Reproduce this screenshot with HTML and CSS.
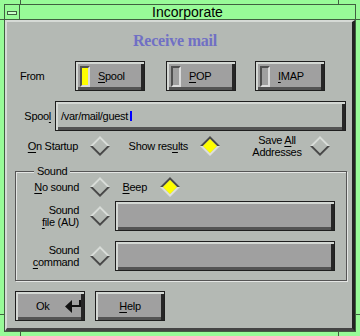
FILE: index.html
```html
<!DOCTYPE html>
<html lang="en">

<head>
    <meta charset="UTF-8">
    <title>Incorporate</title>
    <link rel="stylesheet" href="styles.css">
</head>

<body>
    <div class="frame">
        <!-- resize corner marks on the window frame -->
        <span class="tick tick-v" style="left:20px;top:0"></span>
        <span class="tick tick-v" style="left:338px;top:0"></span>
        <span class="tick tick-v" style="left:20px;bottom:0"></span>
        <span class="tick tick-v" style="left:338px;bottom:0"></span>
        <span class="tick tick-h" style="left:0;top:19px"></span>
        <span class="tick tick-h" style="right:0;top:19px"></span>
        <span class="tick tick-h" style="left:0;top:314px"></span>
        <span class="tick tick-h" style="right:0;top:314px"></span>

        <div class="inner">
            <div class="titlebar">
                <div class="menu"><span class="menu-icon"></span></div>
                <div class="title">Incorporate</div>
            </div>

            <div class="client">
                <div class="heading">Receive mail</div>

                <!-- source choice -->
                <div class="from-row">
                    <div class="from-label">From</div>
                    <button class="bevel toggle"><span class="ind on"></span><span><u>S</u>pool</span></button>
                    <button class="bevel toggle pop"><span class="ind"></span><span><u>P</u>OP</span></button>
                    <button class="bevel toggle imap"><span class="ind"></span><span><u>I</u>MAP</span></button>
                </div>

                <div class="spool-row">
                    <div class="spool-label">Spoo<u>l</u></div>
                    <div class="bevel field">/var/mail/guest<span class="cursor"></span></div>
                </div>

                <div class="opt-row">
                    <div class="opt-label o1"><u>O</u>n Startup</div>
                    <svg class="diamond" width="20" height="20" viewBox="0 0 20 20"><polygon class="d-top" points="0,10 10,0 20,10 17,10 10,3 3,10"/><polygon class="d-bot" points="0,10 10,20 20,10 17,10 10,17 3,10"/><polygon class="d-face" points="10,3 17,10 10,17 3,10"/></svg>
                    <div class="opt-label o2">Show res<u>u</u>lts</div>
                    <svg class="diamond on" width="20" height="20" viewBox="0 0 20 20"><polygon class="d-top" points="0,10 10,0 20,10 17,10 10,3 3,10"/><polygon class="d-bot" points="0,10 10,20 20,10 17,10 10,17 3,10"/><polygon class="d-face" points="10,3 17,10 10,17 3,10"/></svg>
                    <div class="opt-label o3">Save <u>A</u>ll<br>Addresses</div>
                    <svg class="diamond" width="20" height="20" viewBox="0 0 20 20"><polygon class="d-top" points="0,10 10,0 20,10 17,10 10,3 3,10"/><polygon class="d-bot" points="0,10 10,20 20,10 17,10 10,17 3,10"/><polygon class="d-face" points="10,3 17,10 10,17 3,10"/></svg>
                </div>

                <!-- sound settings -->
                <fieldset class="sound">
                    <legend>Sound</legend>
                    <div class="srow first">
                        <div class="slabel"><u>N</u>o sound</div>
                        <svg class="diamond" width="20" height="20" viewBox="0 0 20 20"><polygon class="d-top" points="0,10 10,0 20,10 17,10 10,3 3,10"/><polygon class="d-bot" points="0,10 10,20 20,10 17,10 10,17 3,10"/><polygon class="d-face" points="10,3 17,10 10,17 3,10"/></svg>
                        <div class="beep-label"><u>B</u>eep</div>
                        <svg class="diamond on" width="20" height="20" viewBox="0 0 20 20"><polygon class="d-top" points="0,10 10,0 20,10 17,10 10,3 3,10"/><polygon class="d-bot" points="0,10 10,20 20,10 17,10 10,17 3,10"/><polygon class="d-face" points="10,3 17,10 10,17 3,10"/></svg>
                    </div>
                    <div class="srow">
                        <div class="slabel">Sound<br><u>f</u>ile (AU)</div>
                        <svg class="diamond" width="20" height="20" viewBox="0 0 20 20"><polygon class="d-top" points="0,10 10,0 20,10 17,10 10,3 3,10"/><polygon class="d-bot" points="0,10 10,20 20,10 17,10 10,17 3,10"/><polygon class="d-face" points="10,3 17,10 10,17 3,10"/></svg>
                        <div class="bevel sfield"></div>
                    </div>
                    <div class="srow last">
                        <div class="slabel">Sound<br><u>c</u>ommand</div>
                        <svg class="diamond" width="20" height="20" viewBox="0 0 20 20"><polygon class="d-top" points="0,10 10,0 20,10 17,10 10,3 3,10"/><polygon class="d-bot" points="0,10 10,20 20,10 17,10 10,17 3,10"/><polygon class="d-face" points="10,3 17,10 10,17 3,10"/></svg>
                        <div class="bevel sfield"></div>
                    </div>
                </fieldset>

                <div class="btn-row">
                    <button class="bevel push ok">Ok
                        <svg class="enter" width="16" height="13" viewBox="0 0 16 13"><polygon points="0,6.5 7,0 7,13"/><rect x="7" y="5" width="9" height="2"/><rect x="14" y="0" width="2" height="7"/></svg>
                    </button>
                    <button class="bevel push help"><span><u>H</u>elp</span></button>
                </div>
            </div>
        </div>
    </div>
</body>

</html>
```

FILE: styles.css
```css
body {
    margin: 0;
    font-family: "Liberation Sans", Arial, sans-serif;
    font-size: 11px;
    letter-spacing: -0.3px;
    color: #000;
}

u {
    text-underline-offset: 2px;
}

/* window frame */
.frame {
    width: 360px;
    height: 336px;
    box-sizing: border-box;
    padding: 4px;
    background-color: #98fb98;
    position: relative;
}

.tick {
    position: absolute;
    background-color: #406040;
}

.tick-v {
    width: 1px;
    height: 4px;
}

.tick-h {
    width: 4px;
    height: 1px;
}

.inner {
    height: 100%;
    box-sizing: border-box;
    border: 1px solid #406040;
    display: flex;
    flex-direction: column;
}

.titlebar {
    flex: none;
    height: 14px;
    border-bottom: 1px solid #406040;
    display: flex;
}

.menu {
    width: 15px;
    border-right: 1px solid #406040;
    display: flex;
    justify-content: center;
    padding-top: 6px;
    box-sizing: border-box;
}

.menu-icon {
    width: 8px;
    height: 2px;
    border: 1px solid #406040;
    background-color: #c8ffc8;
}

.title {
    flex: 1;
    text-align: center;
    font-size: 14px;
    line-height: 15px;
    letter-spacing: 0;
}

/* dialog area */
.client {
    flex: 1;
    background-color: #b4b9b4;
    border-style: solid;
    border-width: 2px 3px 3px 2px;
    border-color: #d6dad6 #222 #444 #d6dad6;
    padding: 0 5px 0 8px;
    display: flex;
    flex-direction: column;
}

.heading {
    margin-top: 10px;
    padding-right: 12px;
    line-height: 18px;
    text-align: center;
    font-family: "Liberation Serif", "Times New Roman", serif;
    font-weight: bold;
    font-size: 16px;
    letter-spacing: -0.2px;
    color: #7070c4;
}

.bevel {
    box-sizing: border-box;
    border: 1px solid #1e1e1e;
    box-shadow: inset 2px 2px 0 #d4d8d4, inset -3px 0 0 #262626, inset 0 -3px 0 #545454;
}

.from-row {
    margin-top: 11px;
    display: flex;
    align-items: center;
}

.from-label {
    width: 60px;
    padding-left: 5px;
    box-sizing: border-box;
}

.toggle {
    width: 70px;
    height: 30px;
    margin: 0;
    padding: 0 0 0 4px;
    background-color: #a0a0a0;
    display: flex;
    align-items: center;
    font: inherit;
    letter-spacing: inherit;
    color: #000;
}

.toggle.pop {
    margin-left: 21px;
}

.toggle.imap {
    margin-left: 19px;
}

.ind {
    width: 10px;
    height: 21px;
    box-sizing: border-box;
    border: 2px solid;
    border-color: #505050 #dcdcdc #dcdcdc #505050;
    background-color: #a0a0a0;
    margin-right: 8px;
}

.ind.on {
    background-color: #ffff00;
}

.spool-row {
    margin-top: 10px;
    display: flex;
    align-items: center;
}

.spool-label {
    width: 40px;
    padding-right: 4px;
    box-sizing: border-box;
    text-align: right;
}

.field {
    flex: 1;
    height: 30px;
    margin-right: 1px;
    padding-left: 5px;
    display: flex;
    align-items: center;
}

.cursor {
    width: 2px;
    height: 10px;
    margin-left: 2px;
    background-color: #0000ff;
}

.opt-row {
    margin-top: 3px;
    height: 24px;
    display: flex;
    align-items: center;
}

.opt-label {
    box-sizing: border-box;
    line-height: 12px;
}

.opt-label.o1 {
    width: 75px;
    padding-right: 12px;
    text-align: right;
}

.opt-label.o2 {
    width: 90px;
    padding-right: 12px;
    text-align: right;
}

.opt-label.o3 {
    width: 90px;
    padding-left: 24px;
    text-align: center;
}

.diamond {
    flex: none;
    display: block;
}

.diamond .d-top {
    fill: #d8dcd8;
}

.diamond .d-bot {
    fill: #4a4a4a;
}

.diamond .d-face {
    fill: #b4b9b4;
}

.diamond.on .d-top {
    fill: #4a4a4a;
}

.diamond.on .d-bot {
    fill: #dcdedc;
}

.diamond.on .d-face {
    fill: #ffff00;
}

/* sound group */
.sound {
    margin: 7px 0 0 0;
    padding: 0 0 9px 0;
    min-inline-size: 0;
    border: 1px solid #555;
    box-shadow: inset 1px 1px 0 #e4e6e4, 1px 1px 0 #e4e6e4;
}

.sound legend {
    margin-left: 18px;
    padding: 0 3px;
    line-height: 12px;
    background-color: #b4b9b4;
}

.srow {
    display: flex;
    align-items: center;
    margin-top: 4px;
}

.srow.first {
    margin-top: 0;
}

.srow.last {
    margin-top: 10px;
}

.slabel {
    width: 63px;
    margin-right: 11px;
    text-align: right;
    line-height: 12px;
}

.beep-label {
    width: 50px;
    padding-right: 13px;
    box-sizing: border-box;
    text-align: right;
}

.sfield {
    width: 220px;
    height: 30px;
    margin-left: 5px;
    background-color: #a0a0a0;
}

/* bottom buttons */
.btn-row {
    margin-top: 10px;
    display: flex;
}

.push {
    width: 70px;
    height: 30px;
    margin: 0;
    background-color: #a0a0a0;
    display: flex;
    align-items: center;
    font: inherit;
    letter-spacing: inherit;
    color: #000;
}

.push.ok {
    padding: 0 0 0 20px;
}

.push.help {
    margin-left: 10px;
    padding: 0;
    justify-content: center;
}

.enter {
    margin-left: 16px;
    fill: #111;
}
```
